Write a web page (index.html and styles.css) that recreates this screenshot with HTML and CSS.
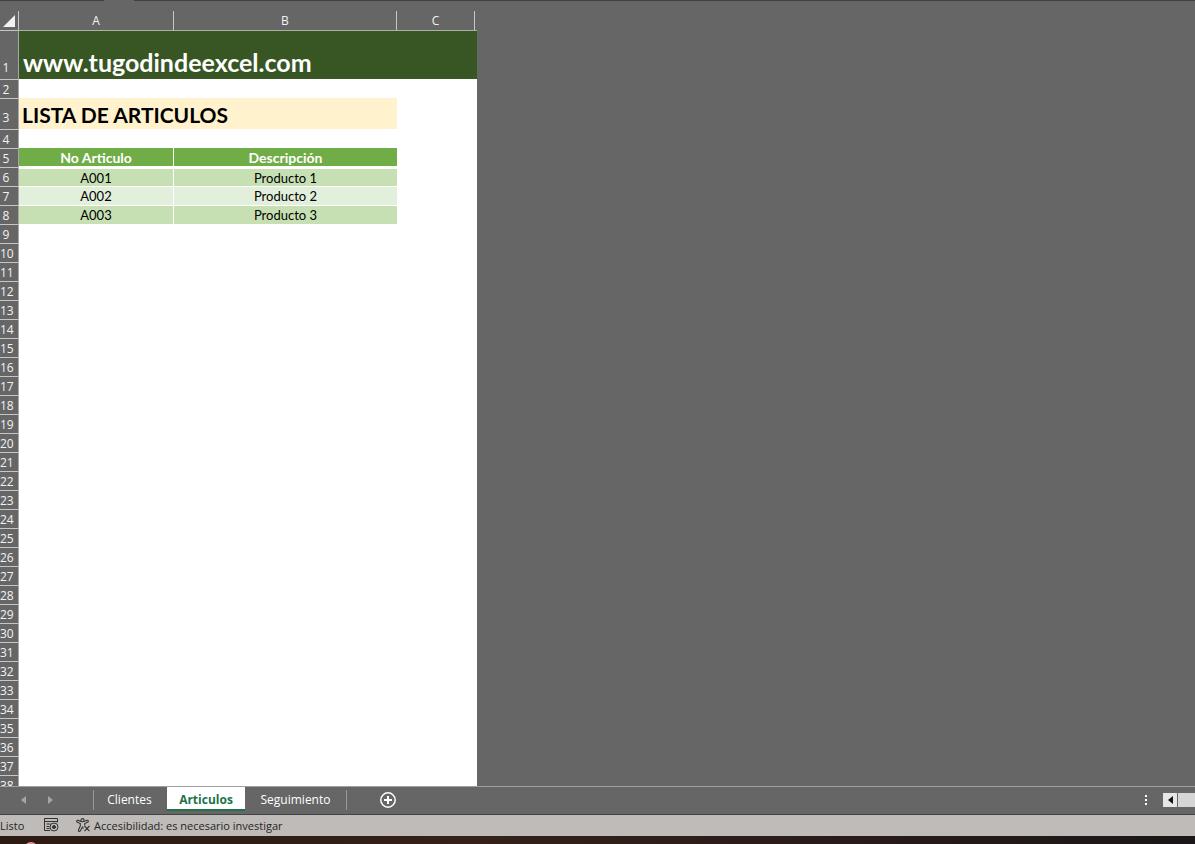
FILE: index.html
```
<!DOCTYPE html>
<html lang="es">
<head>
<meta charset="utf-8">
<title>Lista de articulos</title>
<link rel="stylesheet" href="styles.css">
</head>
<body>
<div class="ribbon-edge"><span class="edge-start"></span><span class="edge-mid"></span><span class="edge-end"></span></div>
<main class="sheet">
<table class="grid">
<colgroup><col class="col-num"><col class="col-a"><col class="col-b"><col class="col-c"><col class="col-end"></colgroup>
<thead>
<tr><th class="corner"><svg width="12" height="12" viewBox="0 0 12 12" aria-hidden="true"><path d="M12 0v12H0z" fill="#f2f2f2"/></svg></th><th>A</th><th>B</th><th>C</th><td></td></tr>
</thead>
<tbody>
<tr class="row-banner"><th>1</th><td colspan="4" class="banner">www.tugodindeexcel.com</td></tr>
<tr><th>2</th><td colspan="4"></td></tr>
<tr class="row-title"><th>3</th><td colspan="2" class="title">LISTA DE ARTICULOS</td><td colspan="2"></td></tr>
<tr><th>4</th><td colspan="4"></td></tr>
<tr class="head"><th>5</th><td>No Articulo</td><td>Descripción</td><td colspan="2"></td></tr>
<tr class="item first"><th>6</th><td>A001</td><td>Producto 1</td><td colspan="2"></td></tr>
<tr class="item light"><th>7</th><td>A002</td><td>Producto 2</td><td colspan="2"></td></tr>
<tr class="item"><th>8</th><td>A003</td><td>Producto 3</td><td colspan="2"></td></tr>
<tr><th>9</th><td colspan="4"></td></tr>
<tr><th>10</th><td colspan="4"></td></tr>
<tr><th>11</th><td colspan="4"></td></tr>
<tr><th>12</th><td colspan="4"></td></tr>
<tr><th>13</th><td colspan="4"></td></tr>
<tr><th>14</th><td colspan="4"></td></tr>
<tr><th>15</th><td colspan="4"></td></tr>
<tr><th>16</th><td colspan="4"></td></tr>
<tr><th>17</th><td colspan="4"></td></tr>
<tr><th>18</th><td colspan="4"></td></tr>
<tr><th>19</th><td colspan="4"></td></tr>
<tr><th>20</th><td colspan="4"></td></tr>
<tr><th>21</th><td colspan="4"></td></tr>
<tr><th>22</th><td colspan="4"></td></tr>
<tr><th>23</th><td colspan="4"></td></tr>
<tr><th>24</th><td colspan="4"></td></tr>
<tr><th>25</th><td colspan="4"></td></tr>
<tr><th>26</th><td colspan="4"></td></tr>
<tr><th>27</th><td colspan="4"></td></tr>
<tr><th>28</th><td colspan="4"></td></tr>
<tr><th>29</th><td colspan="4"></td></tr>
<tr><th>30</th><td colspan="4"></td></tr>
<tr><th>31</th><td colspan="4"></td></tr>
<tr><th>32</th><td colspan="4"></td></tr>
<tr><th>33</th><td colspan="4"></td></tr>
<tr><th>34</th><td colspan="4"></td></tr>
<tr><th>35</th><td colspan="4"></td></tr>
<tr><th>36</th><td colspan="4"></td></tr>
<tr><th>37</th><td colspan="4"></td></tr>
<tr><th>38</th><td colspan="4"></td></tr>
</tbody>
</table>
</main>
<nav class="tabs" aria-label="Hojas">
<div class="arrows">
<button type="button" aria-label="Anterior"><svg width="5" height="8" viewBox="0 0 5 8"><path d="M5 0v8L0 4z" fill="#a6a6a6"/></svg></button>
<button type="button" aria-label="Siguiente"><svg width="5" height="8" viewBox="0 0 5 8"><path d="M0 0v8l5-4z" fill="#a6a6a6"/></svg></button>
</div>
<button type="button" class="tab tab-first">Clientes</button>
<button type="button" class="tab active">Articulos</button>
<button type="button" class="tab tab-last">Seguimiento</button>
<button type="button" class="add" aria-label="Hoja nueva"><svg width="18" height="18" viewBox="0 0 18 18" fill="none" stroke="#fff"><circle cx="9" cy="9" r="7.2" stroke-width="1.5"/><path d="M9 5v8M5 9h8" stroke-width="2"/></svg></button>
<div class="scroll">
<svg class="dots" width="2" height="10" viewBox="0 0 2 10" fill="#fff"><path d="M0 0h2v2H0zM0 4h2v2H0zM0 8h2v2H0z"/></svg>
<button type="button" class="scroll-left" aria-label="Desplazar a la izquierda"><svg width="5" height="8" viewBox="0 0 5 8"><path d="M5 0v8L0 4z" fill="#111"/></svg></button>
<span class="thumb"></span>
</div>
</nav>
<footer class="status">
<span class="ready">Listo</span>
<svg class="macro" width="15" height="14" viewBox="0 0 15 14" fill="none" stroke="#333"><path d="M6 12.500H.5V.5h13v4M.5 3.500h13M2.500 6h4M2.500 8.500h3M2.500 10.500h3"/><circle cx="10" cy="9" r="4"/><circle cx="10" cy="9" r="1.500" fill="#333"/></svg>
<svg class="person" width="15" height="14" viewBox="0 0 15 14" fill="none" stroke="#333" stroke-width="1.100"><circle cx="6.500" cy="2.200" r="1.600"/><path d="M5 3.500 2 2.300C.4 2 .2 3.800 1.500 4.300L4.300 5.500V8L2.500 12c-.3 1.500 1.200 1.900 1.900.8L6.500 9l1 1.500M8 3.500l3-1.200c1.600-.3 1.800 1.500.5 2L8.700 5.500V7.500M8.500 8l5 5.200M13.500 8l-5 5.200"/></svg>
<span>Accesibilidad: es necesario investigar</span>
</footer>
<div class="taskbar"><span class="app"></span></div>
</body>
</html>
```
FILE: styles.css
```
* { box-sizing: border-box; }
body {
  margin: 0;
  height: 100vh;
  display: flex;
  flex-direction: column;
  overflow: hidden;
  background: #666;
  color: #fff;
  font-family: "Open Sans", "Noto Sans", sans-serif;
  font-size: 12px;
}
button {
  margin: 0;
  padding: 0;
  border: 0;
  background: none;
  color: inherit;
  font: inherit;
}
svg { display: block; flex: none; }

.ribbon-edge { display: flex; height: 1px; flex: none; }
.edge-start { width: 104px; background: #404040; }
.edge-mid { width: 30px; }
.edge-end { flex: 1; background: #404040; }

.sheet { flex: 1; min-height: 0; overflow: hidden; padding-top: 10px; }
.grid { width: 477px; table-layout: fixed; border-collapse: separate; border-spacing: 0; }
.col-num { width: 19px; }
.col-a { width: 155px; }
.col-b { width: 223px; }
.col-c { width: 78px; }
.col-end { width: 2px; }
.grid th, .grid td { padding: 0; line-height: 16px; }
.grid th { font-weight: 400; color: #f2f2f2; }
.grid thead th { height: 19px; border-right: 1px solid #c6c6c6; }
.grid .corner { vertical-align: bottom; padding: 0 0 3px 3px; }
.grid tbody tr { height: 19px; }
.grid tbody th {
  background: #666;
  border-top: 1px solid #c6c6c6;
  border-right: 1px solid #a6a6a6;
  text-align: center;
  vertical-align: bottom;
  padding: 2px 6px 0 0;
  white-space: nowrap;
}
.grid .row-banner th, .grid .row-title th { padding-bottom: 3px; }
.grid tbody td { background: #fff; color: #000; font-family: Lato, sans-serif; font-size: 13px; }
.grid .row-banner { height: 49px; }
.grid .row-title { height: 31px; }
.grid .banner {
  background: #375623;
  border-top: 1px solid #a9b3a2;
  color: #fff;
  font-size: 25px;
  font-weight: 700;
  line-height: 32px;
  padding: 0 0 1px 4px;
  vertical-align: bottom;
}
.grid .title {
  background: #fff2cc;
  font-size: 21px;
  font-weight: 700;
  line-height: 28px;
  padding: 2px 0 0 3px;
}
.head td:nth-child(-n+3), .item td:nth-child(-n+3) { text-align: center; }
.grid td:nth-child(2):not([colspan]) { border-right: 1px solid #fff; }
.grid .head td:not([colspan]) { background: #70ad47; color: #fff; font-size: 14px; font-weight: 700; padding-top: 2px; border-bottom: 1px solid #fff; }
.grid .item td:not([colspan]) { background: #c6e0b4; border-top: 1px solid #fff; }
.grid .first td:not([colspan]) { border-top-width: 2px; }
.grid .light td:not([colspan]) { background: #e2efda; }

.tabs { display: flex; flex: none; height: 28px; border-top: 1px solid #a0a0a0; font-size: 12px; }
.arrows { display: flex; align-items: center; gap: 22px; width: 93px; padding-left: 21px; }
.arrows, .scroll { padding-bottom: 1px; }
.tab { height: 20px; margin-top: 3px; line-height: 20px; }
.tab-first { width: 74px; border-left: 1px solid #999; padding-right: 2px; }
.tab.active { width: 78px; height: 24px; margin-top: 0; padding-top: 3px; background: #fff; color: #217346; font-weight: 700; border-bottom: 2px solid #217346; }
.tab-last { width: 102px; border-right: 1px solid #999; }
.add { align-self: center; margin-left: 32px; padding-bottom: 2px; }
.scroll { display: flex; align-items: center; margin-left: auto; }
.dots { margin-right: 16px; }
.scroll-left { display: grid; place-items: center; width: 14px; height: 14px; margin-right: 1px; background: #e6e6e6; }
.thumb { width: 17px; height: 14px; background: #d6d6d6; }

.status {
  display: flex;
  flex: none;
  align-items: center;
  height: 22px;
  padding-bottom: 1px;
  border-top: 1px solid #444;
  background: #bfbbb8;
  color: #262626;
  font-size: 11px;
}
.ready { width: 44px; }
.macro { margin-right: 17px; }
.person { margin-right: 3px; }
.taskbar { flex: none; height: 8px; padding-left: 24px; overflow: hidden; background: linear-gradient(90deg, #2c1a13, #35201a 40%, #1c1618); }
.app { display: block; width: 14px; height: 14px; margin-top: 6px; border-radius: 50%; background: #e8909c; }
```
